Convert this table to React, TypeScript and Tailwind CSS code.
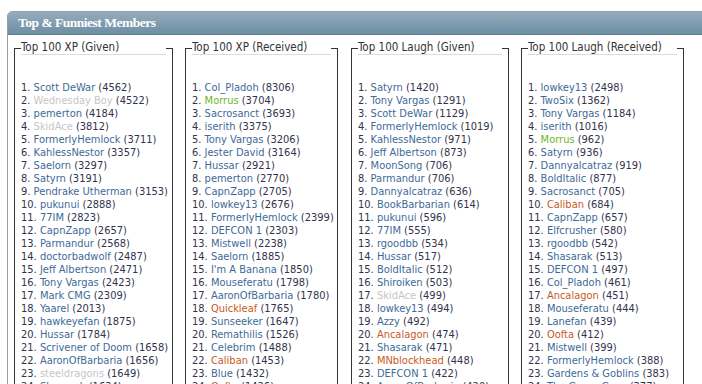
import React from "react";

type Entry = [string, string, string?];

const cols: { title: string; w: string; ml: string; items: Entry[] }[] = [
  {
    title: "Top 100 XP (Given)",
    w: "w-[159px]",
    ml: "ml-0",
    items: [
      ["Scott DeWar", "4562"],
      ["Wednesday Boy", "4522", "g"],
      ["pemerton", "4184"],
      ["SkidAce", "3812", "g"],
      ["FormerlyHemlock", "3711"],
      ["KahlessNestor", "3357"],
      ["Saelorn", "3297"],
      ["Satyrn", "3191"],
      ["Pendrake Utherman", "3153"],
      ["pukunui", "2888"],
      ["77IM", "2823"],
      ["CapnZapp", "2657"],
      ["Parmandur", "2568"],
      ["doctorbadwolf", "2487"],
      ["Jeff Albertson", "2471"],
      ["Tony Vargas", "2423"],
      ["Mark CMG", "2309"],
      ["Yaarel", "2013"],
      ["hawkeyefan", "1875"],
      ["Hussar", "1784"],
      ["Scrivener of Doom", "1658"],
      ["AaronOfBarbaria", "1656"],
      ["steeldragons", "1649", "g"],
      ["Shasarak", "1634"],
    ],
  },
  {
    title: "Top 100 XP (Received)",
    w: "w-[153px]",
    ml: "ml-[12px]",
    items: [
      ["Col_Pladoh", "8306"],
      ["Morrus", "3704", "gr"],
      ["Sacrosanct", "3693"],
      ["iserith", "3375"],
      ["Tony Vargas", "3206"],
      ["Jester David", "3164"],
      ["Hussar", "2921"],
      ["pemerton", "2770"],
      ["CapnZapp", "2705"],
      ["lowkey13", "2676"],
      ["FormerlyHemlock", "2399"],
      ["DEFCON 1", "2303"],
      ["Mistwell", "2238"],
      ["Saelorn", "1885"],
      ["I'm A Banana", "1850"],
      ["Mouseferatu", "1798"],
      ["AaronOfBarbaria", "1780"],
      ["Quickleaf", "1765", "o"],
      ["Sunseeker", "1647"],
      ["Remathilis", "1526"],
      ["Celebrim", "1488"],
      ["Caliban", "1453", "o"],
      ["Blue", "1432"],
      ["Oofta", "1426", "o"],
    ],
  },
  {
    title: "Top 100 Laugh (Given)",
    w: "w-[158px]",
    ml: "ml-[13px]",
    items: [
      ["Satyrn", "1420"],
      ["Tony Vargas", "1291"],
      ["Scott DeWar", "1129"],
      ["FormerlyHemlock", "1019"],
      ["KahlessNestor", "971"],
      ["Jeff Albertson", "873"],
      ["MoonSong", "706"],
      ["Parmandur", "706"],
      ["Dannyalcatraz", "636"],
      ["BookBarbarian", "614"],
      ["pukunui", "596"],
      ["77IM", "555"],
      ["rgoodbb", "534"],
      ["Hussar", "517"],
      ["BoldItalic", "512"],
      ["Shiroiken", "503"],
      ["SkidAce", "499", "g"],
      ["lowkey13", "494"],
      ["Azzy", "492"],
      ["Ancalagon", "474", "o"],
      ["Shasarak", "471"],
      ["MNblockhead", "448", "o"],
      ["DEFCON 1", "422"],
      ["AaronOfBarbaria", "420"],
    ],
  },
  {
    title: "Top 100 Laugh (Received)",
    w: "w-[163px]",
    ml: "ml-[12px]",
    items: [
      ["lowkey13", "2498"],
      ["TwoSix", "1362"],
      ["Tony Vargas", "1184"],
      ["iserith", "1016"],
      ["Morrus", "962", "gr"],
      ["Satyrn", "936"],
      ["Dannyalcatraz", "919"],
      ["BoldItalic", "877"],
      ["Sacrosanct", "705"],
      ["Caliban", "684", "o"],
      ["CapnZapp", "657"],
      ["Elfcrusher", "580"],
      ["rgoodbb", "542"],
      ["Shasarak", "513"],
      ["DEFCON 1", "497"],
      ["Col_Pladoh", "461"],
      ["Ancalagon", "451", "o"],
      ["Mouseferatu", "444"],
      ["Lanefan", "439"],
      ["Oofta", "412", "o"],
      ["Mistwell", "399"],
      ["FormerlyHemlock", "388"],
      ["Gardens & Goblins", "383"],
      ["The Green Gaze", "377"],
    ],
  },
];

function nameClass(k?: string) {
  if (k === "g") return "text-[#c6c6c6]";
  if (k === "gr") return "text-[#6fb526]";
  if (k === "o") return "text-[#c85a1e]";
  return "text-[#3d6a98]";
}

export default function App() {
  return (
    <div
      className="w-[702px] h-[384px] overflow-hidden bg-white pt-[11px] pl-[7px]"
      style={{ fontFamily: '"DejaVu Sans Condensed", "DejaVu Sans", sans-serif' }}
    >
      <div className="w-[760px] h-[400px] border border-[#8da1b0] rounded-tl-[5px] overflow-hidden bg-white">
        <div
          className="h-[23px] bg-gradient-to-b from-[#95acbc] to-[#6e8ea3] border-b border-[#5f7e92] pl-[10px] flex items-center text-white font-bold text-[13.5px] tracking-[-0.5px]"
          style={{ fontFamily: '"Liberation Serif", "DejaVu Serif", serif' }}
        >
          Top &amp; Funniest Members
        </div>
        <div className="flex pl-[6px] pt-[6px]">
          {cols.map((c) => (
            <fieldset
              key={c.title}
              className={`${c.w} ${c.ml} min-w-0 shrink-0 border border-[#333] px-[6px] h-[360px] text-[11px] leading-[13px]`}
            >
              <legend className="w-full p-0 border-b border-[#dcdcdc] text-[#333] leading-[13px] text-[11.5px]">
                {c.title}
              </legend>
              <div className="pt-[26px]">
                {c.items.map((it, i) => (
                  <div key={i} className="whitespace-nowrap text-[#33334d]">
                    {i + 1}. <span className={nameClass(it[2])}>{it[0]}</span> ({it[1]})
                  </div>
                ))}
              </div>
            </fieldset>
          ))}
        </div>
      </div>
    </div>
  );
}
